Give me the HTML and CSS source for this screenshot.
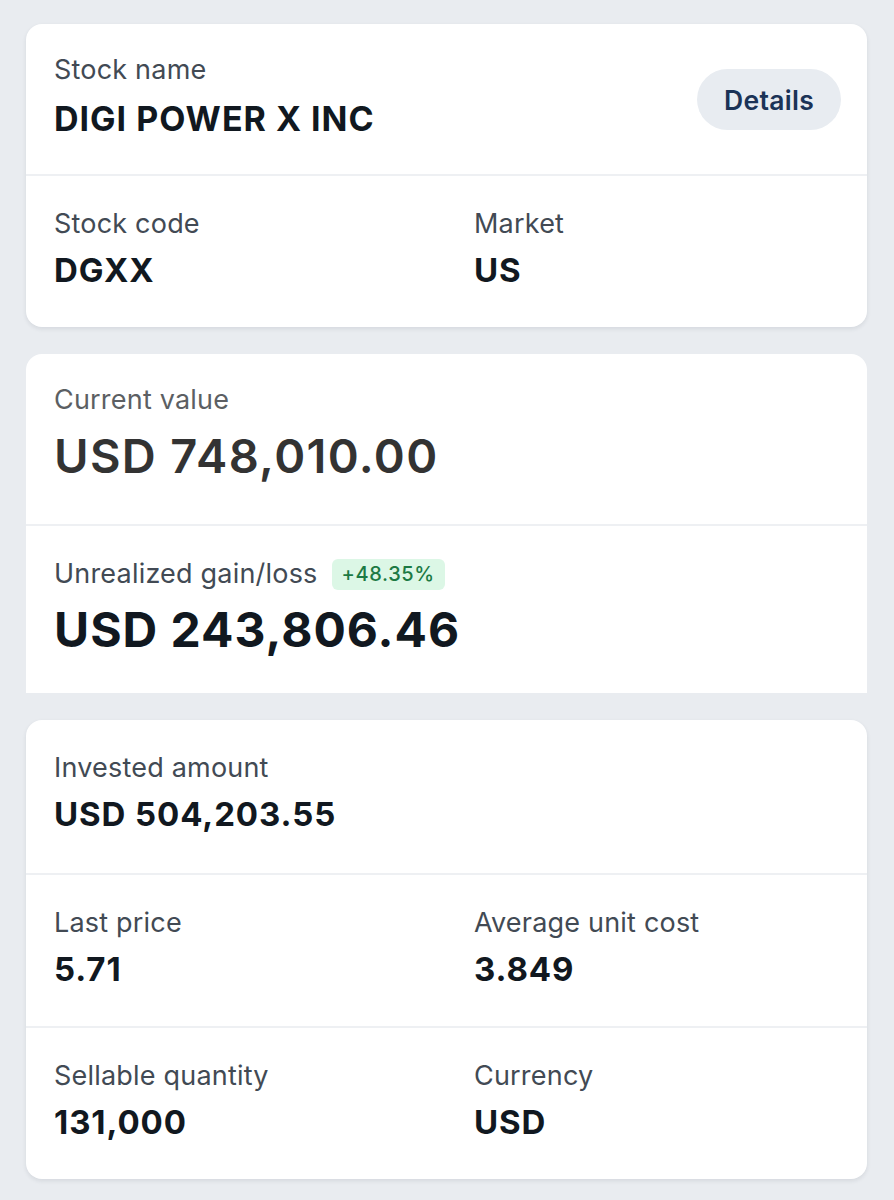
FILE: index.html
```html
<!DOCTYPE html>
<html lang="en">
<head>
<meta charset="utf-8">
<title>DGXX holding</title>
<link rel="stylesheet" href="styles.css">
</head>
<body>
<main class="page">
  <section class="card">
    <div class="row row-head">
      <div class="field">
        <div class="label">Stock name</div>
        <div class="value name">DIGI POWER X INC</div>
      </div>
      <button class="details">Details</button>
    </div>
    <div class="row row-split">
      <div class="field">
        <div class="label">Stock code</div>
        <div class="value">DGXX</div>
      </div>
      <div class="field">
        <div class="label">Market</div>
        <div class="value">US</div>
      </div>
    </div>
  </section>

  <section class="card card-flat">
    <div class="row row-big">
      <div class="field">
        <div class="label label-muted">Current value</div>
        <div class="big big-current">USD 748,010.00</div>
      </div>
    </div>
    <div class="row row-big row-gain">
      <div class="field">
        <div class="label-line">
          <span class="label">Unrealized gain/loss</span>
          <span class="badge">+48.35%</span>
        </div>
        <div class="big big-gain">USD 243,806.46</div>
      </div>
    </div>
  </section>

  <section class="card">
    <div class="row">
      <div class="field">
        <div class="label">Invested amount</div>
        <div class="value">USD 504,203.55</div>
      </div>
    </div>
    <div class="row row-split">
      <div class="field">
        <div class="label">Last price</div>
        <div class="value">5.71</div>
      </div>
      <div class="field">
        <div class="label">Average unit cost</div>
        <div class="value">3.849</div>
      </div>
    </div>
    <div class="row row-split">
      <div class="field">
        <div class="label">Sellable quantity</div>
        <div class="value">131,000</div>
      </div>
      <div class="field">
        <div class="label">Currency</div>
        <div class="value">USD</div>
      </div>
    </div>
  </section>
</main>
</body>
</html>
```

FILE: styles.css
```css
* { box-sizing: border-box; }

html, body {
  margin: 0;
  padding: 0;
  background: #e9ecf0;
}

body {
  font-family: Inter, "Open Sans", "Liberation Sans", sans-serif;
  color: #111820;
}

.page {
  display: flex;
  flex-direction: column;
  gap: 27px;
  padding: 24px 27px 22px 26px;
}

.card {
  background: #ffffff;
  border-radius: 16px;
  box-shadow: 0 2px 4px rgba(40, 50, 70, 0.10);
  overflow: hidden;
}

.card-flat {
  border-radius: 16px 16px 0 0;
  box-shadow: none;
}

.row {
  height: 153px;
  padding: 31px 28px 0 28px;
  border-top: 2px solid #eef0f3;
}

.row:first-child {
  border-top: none;
}

.row-head {
  height: 150px;
  padding-top: 29px;
  display: flex;
  align-items: flex-start;
  justify-content: space-between;
}

.row-split {
  display: grid;
  grid-template-columns: 420px 1fr;
}

.label {
  font-size: 27px;
  line-height: 34px;
  font-weight: 400;
  color: #424a54;
  letter-spacing: 0.2px;
}

.label-muted {
  color: #5c5f63;
}

.value {
  margin-top: 9px;
  font-size: 33px;
  line-height: 40px;
  font-weight: 700;
  color: #111820;
  letter-spacing: 0.9px;
}

.value.name {
  margin-top: 12px;
  font-size: 34px;
  letter-spacing: 1px;
}

.details {
  font-family: inherit;
  border: none;
  background: #e8ecf1;
  color: #1b3357;
  font-size: 26.5px;
  font-weight: 600;
  height: 61px;
  width: 144px;
  border-radius: 31px;
  margin-top: 16px;
  margin-right: -2px;
  padding: 0;
  letter-spacing: 0.3px;
}

.row-big {
  height: 170px;
  padding-top: 29px;
}

.row-gain {
  height: 169px;
  padding-top: 31px;
}

.big {
  line-height: 54px;
}

.big-current {
  margin-top: 12px;
  font-size: 47px;
  letter-spacing: 1.35px;
  font-weight: 600;
  color: #333333;
}

.big-gain {
  margin-top: 12px;
  font-size: 48px;
  letter-spacing: 1px;
  font-weight: 700;
  color: #111820;
}

.label-line {
  display: flex;
  align-items: center;
  gap: 14px;
}

.badge {
  background: #dcf7e6;
  color: #1c7a44;
  font-size: 20px;
  line-height: 31px;
  padding: 0 10px;
  border-radius: 6px;
  font-weight: 500;
  letter-spacing: 0.6px;
}
```
